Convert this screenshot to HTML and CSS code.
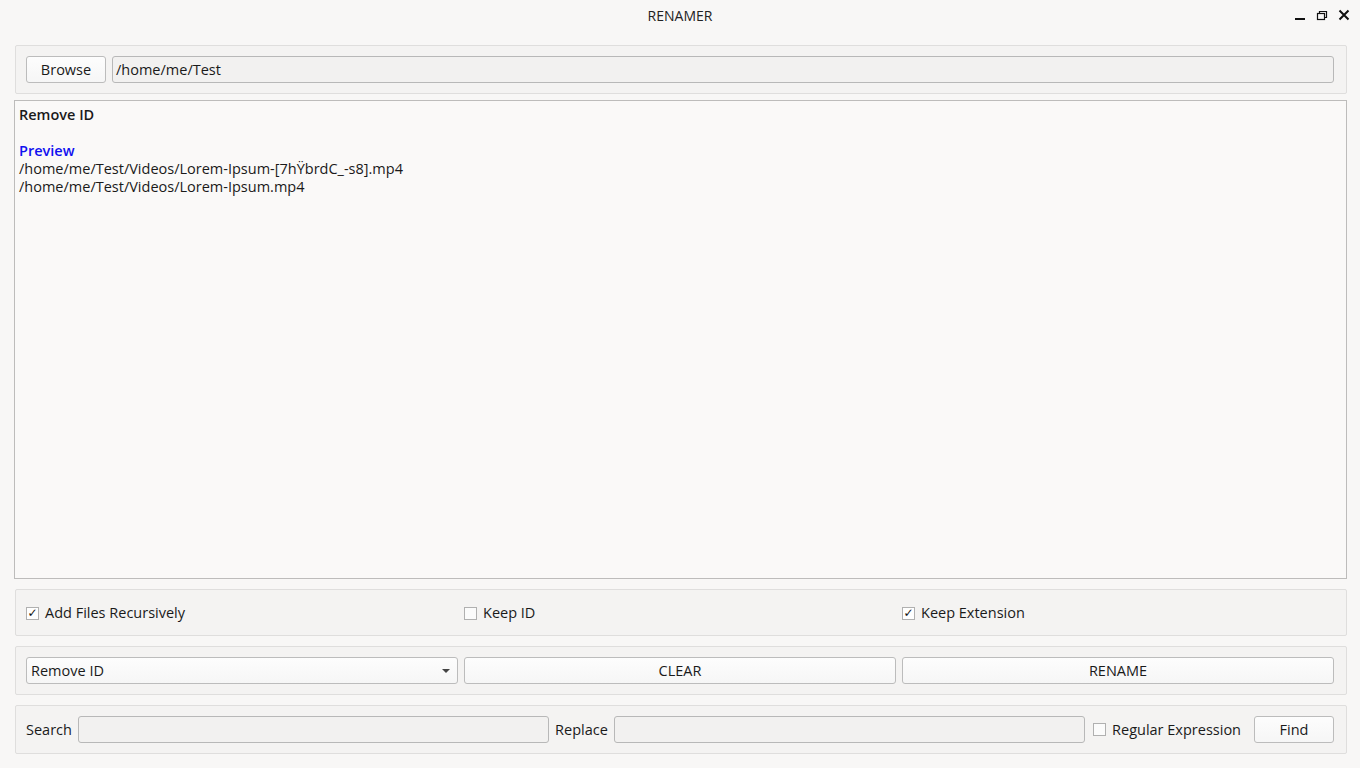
FILE: index.html
```html
<!DOCTYPE html>
<html>
<head>
<meta charset="utf-8">
<link rel="stylesheet" href="styles.css">
</head>
<body>
<div class="window">
  <div class="titlebar">
    <span class="title">RENAMER</span>
    <div class="wm">
      <svg class="wm-btn" width="14" height="14" viewBox="0 0 14 14"><rect x="2" y="10" width="10" height="2" fill="#111"/></svg>
      <svg class="wm-btn" width="14" height="14" viewBox="0 0 14 14" fill="none" stroke="#111" stroke-width="1.2"><rect x="2.5" y="5.5" width="7" height="6"/><path d="M4.5 5.5V3.5h7v6h-2"/></svg>
      <svg class="wm-btn" width="14" height="14" viewBox="0 0 14 14" stroke="#111" stroke-width="2"><path d="M2.5 2.5l9 9M11.5 2.5l-9 9"/></svg>
    </div>
  </div>
  <div class="content">
    <div class="group row">
      <button class="btn browse">Browse</button>
      <div class="field grow">/home/me/Test</div>
    </div>
    <div class="output">
      <div class="bold">Remove ID</div>
      <div>&nbsp;</div>
      <div class="bold blue">Preview</div>
      <div>/home/me/Test/Videos/Lorem-Ipsum-[7hŸbrdC_-s8].mp4</div>
      <div>/home/me/Test/Videos/Lorem-Ipsum.mp4</div>
    </div>
    <div class="group grid3 checks">
      <label class="check"><span class="box on">✓</span>Add Files Recursively</label>
      <label class="check"><span class="box"></span>Keep ID</label>
      <label class="check"><span class="box on">✓</span>Keep Extension</label>
    </div>
    <div class="group grid3">
      <div class="combo"><span>Remove ID</span><span class="arrow"></span></div>
      <button class="btn">CLEAR</button>
      <button class="btn">RENAME</button>
    </div>
    <div class="group row">
      <span class="lbl">Search</span>
      <div class="field grow"></div>
      <span class="lbl">Replace</span>
      <div class="field grow"></div>
      <label class="check regex"><span class="box"></span>Regular Expression</label>
      <button class="btn find">Find</button>
    </div>
  </div>
</div>
</body>
</html>
```

FILE: styles.css
```css
* { box-sizing: border-box; }
html, body { margin: 0; padding: 0; }
body {
  background: #f8f7f6;
  font-family: "Open Sans", "Noto Sans", sans-serif;
  font-size: 14.5px;
  color: #1a1a1a;
  width: 1360px;
  height: 768px;
  overflow: hidden;
}
.titlebar {
  height: 30px;
  position: relative;
  display: flex;
  align-items: center;
  justify-content: center;
}
.title { font-size: 14px; color: #222; }
.wm {
  position: absolute;
  right: 9px;
  top: 8px;
  display: flex;
  gap: 8px;
}
.content {
  padding: 15px 13px 0 14px;
  display: flex;
  flex-direction: column;
}
.group {
  background: #f4f3f2;
  border: 1px solid #dfdedd;
  border-radius: 2px;
  margin-left: 1px;
  padding: 10px 12px 10px 10px;
}
.row { display: flex; align-items: center; gap: 6px; }
.grow { flex: 1; }
.btn {
  font: inherit;
  color: #1a1a1a;
  height: 27px;
  background: linear-gradient(#fdfdfd, #f6f6f6);
  border: 1px solid #bcbcbc;
  border-radius: 3px;
  padding: 0;
}
.browse { width: 80px; }
.find { width: 80px; margin-left: 7px; }
.field {
  height: 27px;
  background: #f2f1f0;
  border: 1px solid #b8b8b8;
  border-radius: 3px;
  padding: 0 3px;
  line-height: 25px;
}
.output {
  margin-top: 6px;
  height: 479px;
  background: #faf9f8;
  border: 1px solid #bdbcbb;
  padding: 5px 4px 4px 4px;
  line-height: 18px;
}
.bold { font-weight: 600; }
.blue { color: #1010f0; }
.grid3 {
  display: grid;
  grid-template-columns: 1fr 1fr 1fr;
  column-gap: 6px;
  align-items: center;
}
.checks { margin-top: 10px; padding-top: 13px; padding-bottom: 12px; height: 47px; }
.checks + .group { margin-top: 10px; }
.group + .group:last-child { margin-top: 10px; }
.check { display: flex; align-items: center; gap: 6px; line-height: 20px; }
.box {
  width: 13px; height: 13px;
  border: 1px solid #b0b0b0;
  background: #fbfbfb;
  display: inline-flex;
  align-items: center;
  justify-content: center;
  font-size: 12px;
  line-height: 1;
  color: #111;
  font-family: "DejaVu Sans", sans-serif;
}
.box.on { background: #fff; }
.combo {
  height: 27px;
  background: linear-gradient(#fdfdfd, #f6f6f6);
  border: 1px solid #bcbcbc;
  border-radius: 3px;
  display: flex;
  align-items: center;
  justify-content: space-between;
  padding: 0 7px 0 4px;
}
.arrow {
  width: 0; height: 0;
  border-left: 4px solid transparent;
  border-right: 4px solid transparent;
  border-top: 4px solid #444;
}
.lbl { line-height: 27px; }
.regex { margin-left: 2px; }
```
